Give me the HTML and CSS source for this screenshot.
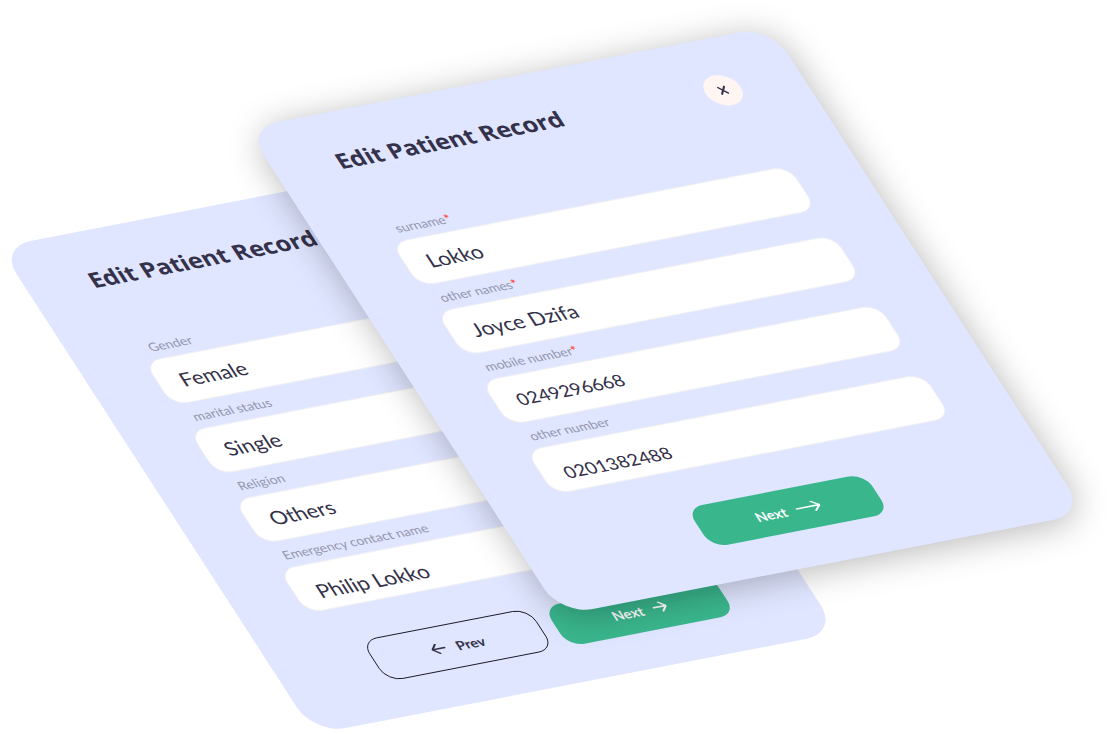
FILE: index.html
```html
<!DOCTYPE html>
<html lang="en">
<head>
<meta charset="utf-8">
<title>Edit Patient Record</title>
<link rel="stylesheet" href="styles.css">
</head>
<body>
<main class="stage">
  <section class="card card-back" aria-labelledby="title-back">
    <header class="card-header">
      <h2 class="card-title" id="title-back">Edit Patient Record</h2>
    </header>
    <form class="form">
      <div class="field">
        <label class="label" for="gender">Gender</label>
        <input class="input" id="gender" type="text" value="Female">
      </div>
      <div class="field">
        <label class="label" for="marital">marital status</label>
        <input class="input" id="marital" type="text" value="Single">
      </div>
      <div class="field">
        <label class="label" for="religion">Religion</label>
        <input class="input" id="religion" type="text" value="Others">
      </div>
      <div class="field">
        <label class="label" for="contact">Emergency contact name</label>
        <input class="input input-low" id="contact" type="text" value="Philip Lokko">
      </div>
      <div class="actions">
        <button class="button button-outline" type="button">
          <svg class="arrow" width="16" height="14" viewBox="0 0 16 14" aria-hidden="true"><path d="M15 7H1M7 1L1 7l6 6"/></svg>
          Prev
        </button>
        <button class="button" type="button">
          Next
          <svg class="arrow" width="16" height="14" viewBox="0 0 16 14" aria-hidden="true"><path d="M1 7h14M9 1l6 6-6 6"/></svg>
        </button>
      </div>
    </form>
  </section>

  <section class="card card-front" aria-labelledby="title-front">
    <header class="card-header">
      <h2 class="card-title" id="title-front">Edit Patient Record</h2>
      <button class="close" type="button" aria-label="Close">
        <svg class="cross" width="12" height="12" viewBox="0 0 12 12" aria-hidden="true"><path d="M2 1l8 10M10 1L2 11"/></svg>
      </button>
    </header>
    <form class="form">
      <div class="field">
        <label class="label" for="surname">surname<span class="required">*</span></label>
        <input class="input" id="surname" type="text" value="Lokko">
      </div>
      <div class="field">
        <label class="label" for="names">other names<span class="required">*</span></label>
        <input class="input" id="names" type="text" value="Joyce Dzifa">
      </div>
      <div class="field">
        <label class="label" for="mobile">mobile number<span class="required">*</span></label>
        <input class="input input-number" id="mobile" type="tel" value="0249296668">
      </div>
      <div class="field">
        <label class="label" for="other">other number</label>
        <input class="input input-number input-low" id="other" type="tel" value="0201382488">
      </div>
      <div class="actions">
        <button class="button button-wide" type="button">
          Next
          <svg class="arrow" width="28" height="14" viewBox="0 0 28 14" aria-hidden="true"><path d="M0 7h27M20 1l7 6-7 6"/></svg>
        </button>
      </div>
    </form>
  </section>
</main>
</body>
</html>
```
FILE: styles.css
```css
* {
  box-sizing: border-box;
}

body {
  margin: 0;
  background: #fff;
  color: #34314a;
  font-family: Lato, "Open Sans", sans-serif;
}

.stage {
  position: relative;
  min-height: 100vh;
  overflow: hidden;
}

/* Both cards lie on the same tilted plane */
.card {
  position: absolute;
  top: 0;
  left: 0;
  width: 601px;
  padding: 46px 70px 46px 70px;
  border-radius: 36px;
  background: #e0e6ff;
  transform-origin: 0 0;
}

.card-back {
  transform: matrix(0.872, -0.169, 0.477, 0.737, -1, 247);
}

.card-front {
  transform: matrix(0.872, -0.169, 0.477, 0.737, 246, 128);
  box-shadow: 0 6px 40px rgba(0, 0, 0, 0.28);
}

.card-header {
  display: flex;
  justify-content: space-between;
  align-items: flex-start;
  min-height: 40px;
  margin-bottom: 52px;
}

.card-title {
  margin: 0;
  font-family: "Open Sans", Lato, sans-serif;
  font-size: 27px;
  font-weight: 700;
  line-height: 32px;
}

.close {
  display: flex;
  align-items: center;
  justify-content: center;
  width: 40px;
  height: 40px;
  padding: 0;
  border: 0;
  border-radius: 50%;
  background: #fff5f3;
  color: inherit;
}

.cross,
.arrow {
  fill: none;
  stroke: currentColor;
  stroke-width: 2;
}

.arrow {
  stroke-linecap: round;
  stroke-linejoin: round;
}

.form {
  padding: 0 3px 0 2px;
}

.field {
  display: flex;
  flex-direction: column;
  gap: 6px;
  padding-top: 8px;
}

.label {
  padding-left: 14px;
  color: #9396ae;
  font-size: 15px;
  line-height: 20px;
}

.required {
  color: #ff4a3d;
  font-weight: 700;
}

.input {
  width: 100%;
  height: 60px;
  padding: 0 24px;
  border: 1px solid #f0f0f0;
  border-radius: 18px;
  background: #fff;
  color: inherit;
  font-family: inherit;
  font-size: 24px;
}

.input-number {
  font-size: 21px;
}

.input-low {
  padding-top: 10px;
}

.actions {
  display: flex;
  justify-content: center;
  align-items: flex-end;
  gap: 16px;
  min-height: 101px;
}

.card-back .actions {
  padding-left: 18px;
}

.button {
  display: flex;
  align-items: center;
  justify-content: center;
  gap: 12px;
  width: 192px;
  height: 54px;
  padding: 0;
  border: 0;
  border-radius: 18px;
  background: #3ab68d;
  color: #fff;
  font-family: inherit;
  font-size: 16px;
  font-weight: 700;
}

.button-wide {
  width: 204px;
}

.button-outline {
  height: 56px;
  border: 1px solid #15131f;
  background: transparent;
  color: #34314a;
}
```
